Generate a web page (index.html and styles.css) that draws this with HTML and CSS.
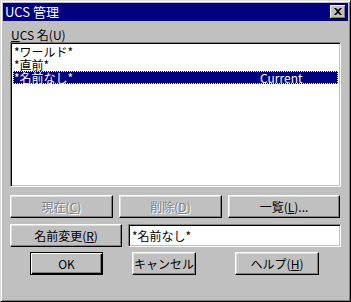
FILE: index.html
```html
<!DOCTYPE html>
<html lang="ja">
<head>
  <meta charset="UTF-8">
  <title>UCS 管理</title>
  <link rel="stylesheet" href="styles.css">
</head>
<body>
  <div class="window">
    <div class="titlebar">
      <span class="title">UCS 管理</span>
      <span class="close">
        <svg width="8" height="7" viewBox="0 0 8 7"><path d="M0 0h2l2 2 2-2h2L5 3.5 8 7H6L4 5 2 7H0l3-3.5z" fill="#000"/></svg>
      </span>
    </div>
    <div class="content">
      <div class="label"><u>U</u>CS 名(U)</div>
      <div class="listbox">
        <div class="item">*ワールド*</div>
        <div class="item">*直前*</div>
        <div class="item selected"><span class="name">*名前なし*</span><span>Current</span></div>
      </div>
      <div class="row row-actions">
        <button class="btn disabled w-103">現在(<u>C</u>)</button>
        <button class="btn disabled w-103">削除(<u>D</u>)</button>
        <button class="btn w-112">一覧(<u>L</u>)...</button>
      </div>
      <div class="row row-rename">
        <button class="btn w-112">名前変更(<u>R</u>)</button>
        <input class="textbox" type="text" value="*名前なし*">
      </div>
      <div class="row row-footer">
        <button class="btn default btn-ok">OK</button>
        <button class="btn btn-cancel">キャンセル</button>
        <button class="btn btn-help">ヘルプ(<u>H</u>)</button>
      </div>
    </div>
  </div>
</body>
</html>
```

FILE: styles.css
```css
body {
  margin: 0;
  background: #c0c0c0;
  font-family: "Noto Sans CJK JP", sans-serif;
  font-size: 12px;
}
.window {
  box-sizing: border-box;
  width: 351px;
  height: 302px;
  padding: 2px;
  background: #c0c0c0;
  border-top: 1px solid #dfdfdf;
  border-left: 1px solid #dfdfdf;
  border-right: 1px solid #000;
  border-bottom: 1px solid #000;
  box-shadow: inset 1px 1px 0 #fff, inset -1px -1px 0 #808080;
}
.titlebar {
  height: 18px;
  background: #000080;
  color: #fff;
  display: flex;
  align-items: center;
  justify-content: space-between;
  padding: 0 2px 0 2px;
}
.title {
  font-size: 13px;
  line-height: 18px;
}
.close {
  box-sizing: border-box;
  width: 16px;
  height: 14px;
  background: #c0c0c0;
  border-right: 1px solid #000;
  border-bottom: 1px solid #000;
  box-shadow: inset 1px 1px 0 #fff, inset -1px -1px 0 #808080;
  display: flex;
  align-items: center;
  justify-content: center;
}
.content {
  padding: 0 7px 0 7px;
}
.label {
  height: 13px;
  line-height: 13px;
  margin-top: 7px;
  margin-bottom: 1px;
  padding-left: 1px;
}
.listbox {
  box-sizing: border-box;
  height: 145px;
  background: #fff;
  border-top: 1px solid #808080;
  border-left: 1px solid #808080;
  border-right: 1px solid #fff;
  border-bottom: 1px solid #fff;
  box-shadow: inset 1px 1px 0 #000, inset -1px -1px 0 #c0c0c0;
  padding: 2px 2px;
}
.item {
  height: 13px;
  line-height: 13px;
  padding-left: 1px;
  display: flex;
}
.item.selected {
  background: #000080;
  color: #fff;
  outline: 1px dotted #ffff80;
  outline-offset: -1px;
}
.item .name {
  width: 246px;
}
.row {
  display: flex;
}
.row-actions {
  margin-top: 8px;
  gap: 6px;
}
.row-rename {
  margin-top: 6px;
  gap: 6px;
}
.row-footer {
  margin-top: 5px;
}
.btn {
  box-sizing: border-box;
  height: 23px;
  padding: 0;
  background: #c0c0c0;
  font-family: inherit;
  font-size: 12px;
  color: #000;
  border-top: 1px solid #fff;
  border-left: 1px solid #fff;
  border-right: 1px solid #000;
  border-bottom: 1px solid #000;
  box-shadow: inset -1px -1px 0 #808080, inset 1px 1px 0 #dfdfdf;
}
.btn.disabled {
  color: #808080;
  text-shadow: 1px 1px 0 #fff;
}
.btn.default {
  border: 1px solid #000;
  box-shadow: inset 1px 1px 0 #fff, inset -1px -1px 0 #000, inset -2px -2px 0 #808080;
}
.w-103 {
  width: 103px;
}
.w-112 {
  width: 112px;
}
.textbox {
  box-sizing: border-box;
  width: 213px;
  height: 23px;
  margin: 0;
  padding: 0 3px;
  font-family: inherit;
  font-size: 12px;
  background: #fff;
  border-top: 1px solid #808080;
  border-left: 1px solid #808080;
  border-right: 1px solid #fff;
  border-bottom: 1px solid #fff;
  box-shadow: inset 1px 1px 0 #000, inset -1px -1px 0 #c0c0c0;
  outline: none;
}
.btn-ok {
  width: 73px;
  height: 23px;
  margin-left: 20px;
}
.btn-cancel {
  width: 64px;
  margin-left: 29px;
}
.btn-help {
  width: 84px;
  margin-left: 39px;
}
```
